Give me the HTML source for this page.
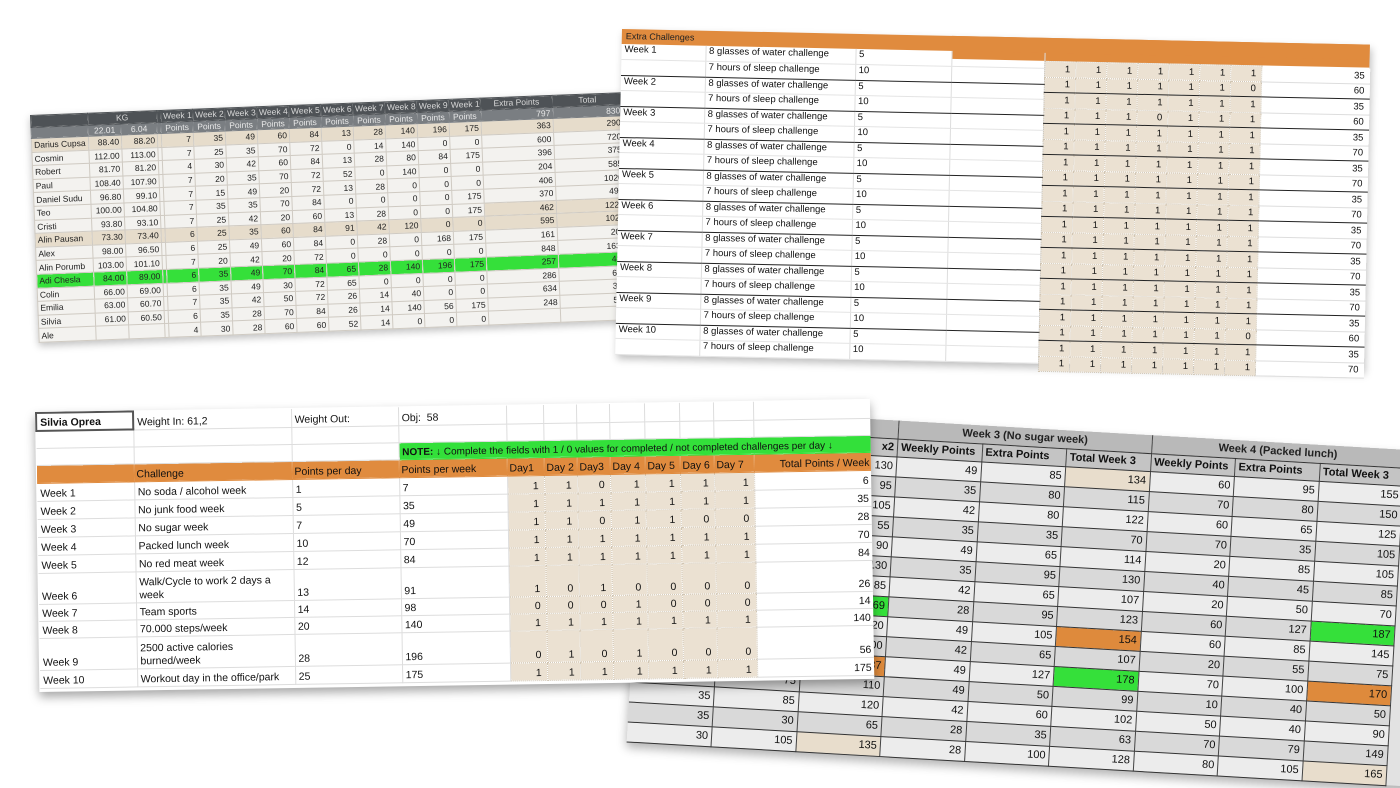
<!DOCTYPE html>
<html><head><meta charset="utf-8">
<style>
*{margin:0;padding:0;box-sizing:border-box}
body{width:1400px;height:788px;background:#fff;position:relative;overflow:hidden;font-family:"Liberation Sans",sans-serif;color:#111}
.p{position:absolute;transform-origin:0 0}
table{border-collapse:collapse;table-layout:fixed}
td{overflow:hidden;white-space:nowrap}
/* panel 1 */
#p1{left:30px;top:115px;width:592px;transform:rotate(-2.2deg);box-shadow:0 3px 8px rgba(0,0,0,.25);background:#f3f2ef;z-index:2}
#p1 table{width:592px}
#p1 td{font-size:8.5px;height:13.6px;border:1px solid #cfcac2;text-align:right;padding:0 2px;color:#222}
#p1 td:first-child{text-align:left}
#p1 tr.h1 td{background:#4e5256;color:#d8d8d8;border-color:#4e5256;height:11.5px;text-align:center}
#p1 tr.h2 td{background:#7a7e82;color:#e8e8e8;border-color:#7a7e82;height:11.5px;text-align:center}
#p1 tr.b td{background:#e6dccb}
#p1 tr.g td{background:#35e03a}
/* panel 2 */
#p2{left:622px;top:29px;width:748px;height:326px;transform:rotate(1.2deg);background:#fff;box-shadow:2px 4px 8px rgba(0,0,0,.25);z-index:3}
#p2 .hd{position:absolute;left:0;top:0;width:748px;height:15px;background:#e08b3e;font-size:9px;padding:2px 4px;color:#222}
#p2 .hd2{position:absolute;left:330px;top:0;width:418px;height:23px;background:#e08b3e}
#p2 table.l{position:absolute;left:0;top:15px;width:423px}
#p2 table.l td{height:15.5px;font-size:9.5px;padding:0 3px;border-right:1px solid #ddd;border-bottom:1px solid #e4e4e4;vertical-align:top}
#p2 table.l tr.e td{border-bottom:1.5px solid #222}
#p2 table.r{position:absolute;left:423px;top:23px;width:325px}
#p2 table.r td{height:15.5px;font-size:9.5px;text-align:right;padding:0 5px;background:#ebe1d2;border:1px dotted #d0c5b3}
#p2 table.r td.t{background:#fff;border:none;border-bottom:1px solid #ddd}
#p2 table.r tr.e td{border-bottom:1.5px solid #222}
/* panel 4 */
#p4{left:646px;top:406px;width:800px;height:336px;transform:rotate(3.3deg);background:#e2e2e2;box-shadow:0 6px 10px rgba(0,0,0,.3);z-index:1}
#p4 table{width:760px}
#p4 td{height:20px;font-size:11px;text-align:right;padding:0 3px;border-right:1.5px solid #444;border-bottom:1.5px solid #333;background:#ececec}
#p4 tr.a td{background:#d9d9d9}
#p4 tr.h td{background:#b9b9b9;font-weight:bold;text-align:center;height:18px;font-size:11px;color:#222}
#p4 tr.h2 td{background:#c4c4c4;font-weight:bold;text-align:left;height:18px;font-size:11px}
#p4 td.o{background:#de8a3c!important}
#p4 td.gr{background:#35e03a!important}
#p4 td.be{background:#e8ddcc!important}
/* panel 3 */
#p3{left:35px;top:412px;width:835px;height:280px;transform:rotate(-0.9deg);background:#fff;box-shadow:0 5px 10px rgba(0,0,0,.35);z-index:4;overflow:hidden}
#p3 table{position:absolute;left:0;top:0;width:835px}
#p3 td{font-size:10.5px;padding:0 3px;border-right:1px solid #ddd;border-bottom:1px solid #ddd;vertical-align:bottom;white-space:normal;line-height:13px}
#p3 td.d{background:#ebe1d2;text-align:right;border:1px dotted #d0c5b3;padding-right:5px}
#p3 td.n{text-align:right}
#p3 tr.hd td{background:#e08b3e;border-color:#e08b3e;font-size:10.5px;white-space:nowrap;padding:0 2px}
</style></head><body>

<div class="p" id="p4">
<table>
<colgroup><col style="width:84.5px"><col style="width:84.5px"><col style="width:84.5px"><col style="width:84.5px"><col style="width:84.5px"><col style="width:84.5px"><col style="width:84.5px"><col style="width:84.5px"><col style="width:84px"></colgroup>
<tr class="h"><td></td><td></td><td></td><td colspan="3">Week 3 (No sugar week)</td><td colspan="3">Week 4 (Packed lunch)</td></tr>
<tr class="h2"><td></td><td></td><td style="text-align:right">x2</td><td>Weekly Points</td><td>Extra Points</td><td>Total Week 3</td><td>Weekly Points</td><td>Extra Points</td><td>Total Week 3</td></tr>
<tr><td></td><td></td><td>130</td><td>49</td><td>85</td><td class="be">134</td><td>60</td><td>95</td><td>155</td></tr>
<tr class="a"><td></td><td></td><td>95</td><td>35</td><td>80</td><td>115</td><td>70</td><td>80</td><td>150</td></tr>
<tr><td></td><td></td><td>105</td><td>42</td><td>80</td><td>122</td><td>60</td><td>65</td><td>125</td></tr>
<tr class="a"><td></td><td></td><td>55</td><td>35</td><td>35</td><td>70</td><td>70</td><td>35</td><td>105</td></tr>
<tr><td></td><td></td><td>90</td><td>49</td><td>65</td><td>114</td><td>20</td><td>85</td><td>105</td></tr>
<tr class="a"><td></td><td></td><td>130</td><td>35</td><td>95</td><td>130</td><td>40</td><td>45</td><td>85</td></tr>
<tr><td></td><td></td><td>85</td><td>42</td><td>65</td><td>107</td><td>20</td><td>50</td><td>70</td></tr>
<tr class="a"><td></td><td></td><td class="gr">69</td><td>28</td><td>95</td><td>123</td><td>60</td><td>127</td><td class="gr">187</td></tr>
<tr><td></td><td></td><td>20</td><td>49</td><td>105</td><td class="o">154</td><td>60</td><td>85</td><td>145</td></tr>
<tr class="a"><td></td><td></td><td>00</td><td>42</td><td>65</td><td>107</td><td>20</td><td>55</td><td>75</td></tr>
<tr><td></td><td></td><td class="o">37</td><td>49</td><td>127</td><td class="gr">178</td><td>70</td><td>100</td><td class="o">170</td></tr>
<tr class="a"><td></td><td>75</td><td>110</td><td>49</td><td>50</td><td>99</td><td>10</td><td>40</td><td>50</td></tr>
<tr><td>35</td><td>85</td><td>120</td><td>42</td><td>60</td><td>102</td><td>50</td><td>40</td><td>90</td></tr>
<tr class="a"><td>35</td><td>30</td><td>65</td><td>28</td><td>35</td><td>63</td><td>70</td><td>79</td><td>149</td></tr>
<tr><td>30</td><td>105</td><td class="be">135</td><td>28</td><td>100</td><td>128</td><td>80</td><td>105</td><td class="be">165</td></tr>
</table>
</div>

<div class="p" id="p1">
<table>
<colgroup><col style="width:57px"><col style="width:33px"><col style="width:36px"><col style="width:4px"><col style="width:32px"><col style="width:32px"><col style="width:32px"><col style="width:32px"><col style="width:32px"><col style="width:32px"><col style="width:32px"><col style="width:32px"><col style="width:32px"><col style="width:32px"><col style="width:72px"><col style="width:70px"></colgroup>
<tr class="h1"><td></td><td colspan="2">KG</td><td></td><td>Week 1</td><td>Week 2</td><td>Week 3</td><td>Week 4</td><td>Week 5</td><td>Week 6</td><td>Week 7</td><td>Week 8</td><td>Week 9</td><td>Week 10 Points</td><td>Extra Points</td><td>Total</td></tr>
<tr class="h2"><td></td><td>22.01</td><td>6.04</td><td></td><td>Points</td><td>Points</td><td>Points</td><td>Points</td><td>Points</td><td>Points</td><td>Points</td><td>Points</td><td>Points</td><td>Points</td><td style="text-align:right">797</td><td style="text-align:right">830</td></tr>
<tr class="b"><td>Darius Cupsa</td><td>88.40</td><td>88.20</td><td></td><td>7</td><td>35</td><td>49</td><td>60</td><td>84</td><td>13</td><td>28</td><td>140</td><td>196</td><td>175</td><td>363</td><td>290</td></tr>
<tr><td>Cosmin</td><td>112.00</td><td>113.00</td><td></td><td>7</td><td>25</td><td>35</td><td>70</td><td>72</td><td>0</td><td>14</td><td>140</td><td>0</td><td>0</td><td>600</td><td>720</td></tr>
<tr><td>Robert</td><td>81.70</td><td>81.20</td><td></td><td>4</td><td>30</td><td>42</td><td>60</td><td>84</td><td>13</td><td>28</td><td>80</td><td>84</td><td>175</td><td>396</td><td>375</td></tr>
<tr><td>Paul</td><td>108.40</td><td>107.90</td><td></td><td>7</td><td>20</td><td>35</td><td>70</td><td>72</td><td>52</td><td>0</td><td>140</td><td>0</td><td>0</td><td>204</td><td>585</td></tr>
<tr><td>Daniel Sudu</td><td>96.80</td><td>99.10</td><td></td><td>7</td><td>15</td><td>49</td><td>20</td><td>72</td><td>13</td><td>28</td><td>0</td><td>0</td><td>0</td><td>406</td><td>1020</td></tr>
<tr><td>Teo</td><td>100.00</td><td>104.80</td><td></td><td>7</td><td>35</td><td>35</td><td>70</td><td>84</td><td>0</td><td>0</td><td>0</td><td>0</td><td>175</td><td>370</td><td>495</td></tr>
<tr><td>Cristi</td><td>93.80</td><td>93.10</td><td></td><td>7</td><td>25</td><td>42</td><td>20</td><td>60</td><td>13</td><td>28</td><td>0</td><td>0</td><td>175</td><td style="background:#e6dccb">462</td><td style="background:#e6dccb">1226</td></tr>
<tr class="b"><td>Alin Pausan</td><td>73.30</td><td>73.40</td><td></td><td>6</td><td>25</td><td>35</td><td>60</td><td>84</td><td>91</td><td>42</td><td>120</td><td>0</td><td>0</td><td>595</td><td>1020</td></tr>
<tr><td>Alex</td><td>98.00</td><td>96.50</td><td></td><td>6</td><td>25</td><td>49</td><td>60</td><td>84</td><td>0</td><td>28</td><td>0</td><td>168</td><td>175</td><td>161</td><td>200</td></tr>
<tr><td>Alin Porumb</td><td>103.00</td><td>101.10</td><td></td><td>7</td><td>20</td><td>42</td><td>20</td><td>72</td><td>0</td><td>0</td><td>0</td><td>0</td><td>0</td><td>848</td><td>1632</td></tr>
<tr class="g"><td>Adi Chesla</td><td>84.00</td><td>89.00</td><td></td><td>6</td><td>35</td><td>49</td><td>70</td><td>84</td><td>65</td><td>28</td><td>140</td><td>196</td><td>175</td><td>257</td><td>480</td></tr>
<tr><td>Colin</td><td>66.00</td><td>69.00</td><td></td><td>6</td><td>35</td><td>49</td><td>30</td><td>72</td><td>65</td><td>0</td><td>0</td><td>0</td><td>0</td><td>286</td><td>600</td></tr>
<tr><td>Emilia</td><td>63.00</td><td>60.70</td><td></td><td>7</td><td>35</td><td>42</td><td>50</td><td>72</td><td>26</td><td>14</td><td>40</td><td>0</td><td>0</td><td>634</td><td>364</td></tr>
<tr><td>Silvia</td><td>61.00</td><td>60.50</td><td></td><td>6</td><td>35</td><td>28</td><td>70</td><td>84</td><td>26</td><td>14</td><td>140</td><td>56</td><td>175</td><td>248</td><td>510</td></tr>
<tr><td>Ale</td><td></td><td></td><td></td><td>4</td><td>30</td><td>28</td><td>60</td><td>60</td><td>52</td><td>14</td><td>0</td><td>0</td><td>0</td><td></td><td></td></tr>
</table>
</div>

<div class="p" id="p2">
<div class="hd2"></div>
<div class="hd">Extra Challenges</div>
<table class="l">
<colgroup><col style="width:84px"><col style="width:150px"><col style="width:96px"><col style="width:93px"></colgroup>
<tr><td>Week 1</td><td>8 glasses of water challenge</td><td>5</td><td></td></tr>
<tr class="e"><td></td><td>7 hours of sleep challenge</td><td>10</td><td></td></tr>
<tr><td>Week 2</td><td>8 glasses of water challenge</td><td>5</td><td></td></tr>
<tr class="e"><td></td><td>7 hours of sleep challenge</td><td>10</td><td></td></tr>
<tr><td>Week 3</td><td>8 glasses of water challenge</td><td>5</td><td></td></tr>
<tr class="e"><td></td><td>7 hours of sleep challenge</td><td>10</td><td></td></tr>
<tr><td>Week 4</td><td>8 glasses of water challenge</td><td>5</td><td></td></tr>
<tr class="e"><td></td><td>7 hours of sleep challenge</td><td>10</td><td></td></tr>
<tr><td>Week 5</td><td>8 glasses of water challenge</td><td>5</td><td></td></tr>
<tr class="e"><td></td><td>7 hours of sleep challenge</td><td>10</td><td></td></tr>
<tr><td>Week 6</td><td>8 glasses of water challenge</td><td>5</td><td></td></tr>
<tr class="e"><td></td><td>7 hours of sleep challenge</td><td>10</td><td></td></tr>
<tr><td>Week 7</td><td>8 glasses of water challenge</td><td>5</td><td></td></tr>
<tr class="e"><td></td><td>7 hours of sleep challenge</td><td>10</td><td></td></tr>
<tr><td>Week 8</td><td>8 glasses of water challenge</td><td>5</td><td></td></tr>
<tr class="e"><td></td><td>7 hours of sleep challenge</td><td>10</td><td></td></tr>
<tr><td>Week 9</td><td>8 glasses of water challenge</td><td>5</td><td></td></tr>
<tr class="e"><td></td><td>7 hours of sleep challenge</td><td>10</td><td></td></tr>
<tr><td>Week 10</td><td>8 glasses of water challenge</td><td>5</td><td></td></tr>
<tr><td></td><td>7 hours of sleep challenge</td><td>10</td><td></td></tr>
</table>
<table class="r">
<colgroup><col style="width:31px"><col style="width:31px"><col style="width:31px"><col style="width:31px"><col style="width:31px"><col style="width:31px"><col style="width:31px"><col style="width:108px"></colgroup>
<tr><td>1</td><td>1</td><td>1</td><td>1</td><td>1</td><td>1</td><td>1</td><td class="t">35</td></tr>
<tr class="e"><td>1</td><td>1</td><td>1</td><td>1</td><td>1</td><td>1</td><td>0</td><td class="t">60</td></tr>
<tr><td>1</td><td>1</td><td>1</td><td>1</td><td>1</td><td>1</td><td>1</td><td class="t">35</td></tr>
<tr class="e"><td>1</td><td>1</td><td>1</td><td>0</td><td>1</td><td>1</td><td>1</td><td class="t">60</td></tr>
<tr><td>1</td><td>1</td><td>1</td><td>1</td><td>1</td><td>1</td><td>1</td><td class="t">35</td></tr>
<tr class="e"><td>1</td><td>1</td><td>1</td><td>1</td><td>1</td><td>1</td><td>1</td><td class="t">70</td></tr>
<tr><td>1</td><td>1</td><td>1</td><td>1</td><td>1</td><td>1</td><td>1</td><td class="t">35</td></tr>
<tr class="e"><td>1</td><td>1</td><td>1</td><td>1</td><td>1</td><td>1</td><td>1</td><td class="t">70</td></tr>
<tr><td>1</td><td>1</td><td>1</td><td>1</td><td>1</td><td>1</td><td>1</td><td class="t">35</td></tr>
<tr class="e"><td>1</td><td>1</td><td>1</td><td>1</td><td>1</td><td>1</td><td>1</td><td class="t">70</td></tr>
<tr><td>1</td><td>1</td><td>1</td><td>1</td><td>1</td><td>1</td><td>1</td><td class="t">35</td></tr>
<tr class="e"><td>1</td><td>1</td><td>1</td><td>1</td><td>1</td><td>1</td><td>1</td><td class="t">70</td></tr>
<tr><td>1</td><td>1</td><td>1</td><td>1</td><td>1</td><td>1</td><td>1</td><td class="t">35</td></tr>
<tr class="e"><td>1</td><td>1</td><td>1</td><td>1</td><td>1</td><td>1</td><td>1</td><td class="t">70</td></tr>
<tr><td>1</td><td>1</td><td>1</td><td>1</td><td>1</td><td>1</td><td>1</td><td class="t">35</td></tr>
<tr class="e"><td>1</td><td>1</td><td>1</td><td>1</td><td>1</td><td>1</td><td>1</td><td class="t">70</td></tr>
<tr><td>1</td><td>1</td><td>1</td><td>1</td><td>1</td><td>1</td><td>1</td><td class="t">35</td></tr>
<tr class="e"><td>1</td><td>1</td><td>1</td><td>1</td><td>1</td><td>1</td><td>0</td><td class="t">60</td></tr>
<tr><td>1</td><td>1</td><td>1</td><td>1</td><td>1</td><td>1</td><td>1</td><td class="t">35</td></tr>
<tr><td>1</td><td>1</td><td>1</td><td>1</td><td>1</td><td>1</td><td>1</td><td class="t">70</td></tr>
</table>
</div>

<div class="p" id="p3">
<table>
<colgroup><col style="width:97px"><col style="width:158px"><col style="width:107px"><col style="width:108px"><col style="width:37px"><col style="width:33px"><col style="width:33px"><col style="width:35px"><col style="width:35px"><col style="width:34px"><col style="width:40px"><col style="width:118px"></colgroup>
<tr style="height:18px"><td style="border:2px solid #555;font-weight:bold">Silvia Oprea</td><td>Weight In: 61,2</td><td>Weight Out:</td><td>Obj:&nbsp; 58</td><td></td><td></td><td></td><td></td><td></td><td></td><td></td><td></td></tr>
<tr style="height:17px"><td></td><td></td><td></td><td></td><td></td><td></td><td></td><td></td><td></td><td></td><td></td><td></td></tr>
<tr style="height:17px"><td></td><td></td><td></td><td colspan="9" style="background:#33e03a;font-size:10px;white-space:nowrap;overflow:hidden;border-color:#33e03a"><b>NOTE:</b> ↓ Complete the fields with 1 / 0 values for completed / not completed challenges per day ↓</td></tr>
<tr class="hd" style="height:18px"><td></td><td>Challenge</td><td>Points per day</td><td>Points per week</td><td>Day1</td><td>Day 2</td><td>Day3</td><td>Day 4</td><td>Day 5</td><td>Day 6</td><td>Day 7</td><td style="text-align:right">Total Points / Week</td></tr>
<tr style="height:18px"><td>Week 1</td><td>No soda / alcohol week</td><td>1</td><td>7</td><td class="d">1</td><td class="d">1</td><td class="d">0</td><td class="d">1</td><td class="d">1</td><td class="d">1</td><td class="d">1</td><td class="n">6</td></tr>
<tr style="height:18px"><td>Week 2</td><td>No junk food week</td><td>5</td><td>35</td><td class="d">1</td><td class="d">1</td><td class="d">1</td><td class="d">1</td><td class="d">1</td><td class="d">1</td><td class="d">1</td><td class="n">35</td></tr>
<tr style="height:18px"><td>Week 3</td><td>No sugar week</td><td>7</td><td>49</td><td class="d">1</td><td class="d">1</td><td class="d">0</td><td class="d">1</td><td class="d">1</td><td class="d">0</td><td class="d">0</td><td class="n">28</td></tr>
<tr style="height:18px"><td>Week 4</td><td>Packed lunch week</td><td>10</td><td>70</td><td class="d">1</td><td class="d">1</td><td class="d">1</td><td class="d">1</td><td class="d">1</td><td class="d">1</td><td class="d">1</td><td class="n">70</td></tr>
<tr style="height:18px"><td>Week 5</td><td>No red meat week</td><td>12</td><td>84</td><td class="d">1</td><td class="d">1</td><td class="d">1</td><td class="d">1</td><td class="d">1</td><td class="d">1</td><td class="d">1</td><td class="n">84</td></tr>
<tr style="height:31px"><td>Week 6</td><td>Walk/Cycle to work 2 days a week</td><td>13</td><td>91</td><td class="d">1</td><td class="d">0</td><td class="d">1</td><td class="d">0</td><td class="d">0</td><td class="d">0</td><td class="d">0</td><td class="n">26</td></tr>
<tr style="height:17px"><td>Week 7</td><td>Team sports</td><td>14</td><td>98</td><td class="d">0</td><td class="d">0</td><td class="d">0</td><td class="d">1</td><td class="d">0</td><td class="d">0</td><td class="d">0</td><td class="n">14</td></tr>
<tr style="height:17px"><td>Week 8</td><td>70.000 steps/week</td><td>20</td><td>140</td><td class="d">1</td><td class="d">1</td><td class="d">1</td><td class="d">1</td><td class="d">1</td><td class="d">1</td><td class="d">1</td><td class="n">140</td></tr>
<tr style="height:32px"><td>Week 9</td><td>2500 active calories burned/week</td><td>28</td><td>196</td><td class="d">0</td><td class="d">1</td><td class="d">0</td><td class="d">1</td><td class="d">0</td><td class="d">0</td><td class="d">0</td><td class="n">56</td></tr>
<tr style="height:18px"><td>Week 10</td><td>Workout day in the office/park</td><td>25</td><td>175</td><td class="d">1</td><td class="d">1</td><td class="d">1</td><td class="d">1</td><td class="d">1</td><td class="d">1</td><td class="d">1</td><td class="n">175</td></tr>
</table>
</div>
</body></html>
